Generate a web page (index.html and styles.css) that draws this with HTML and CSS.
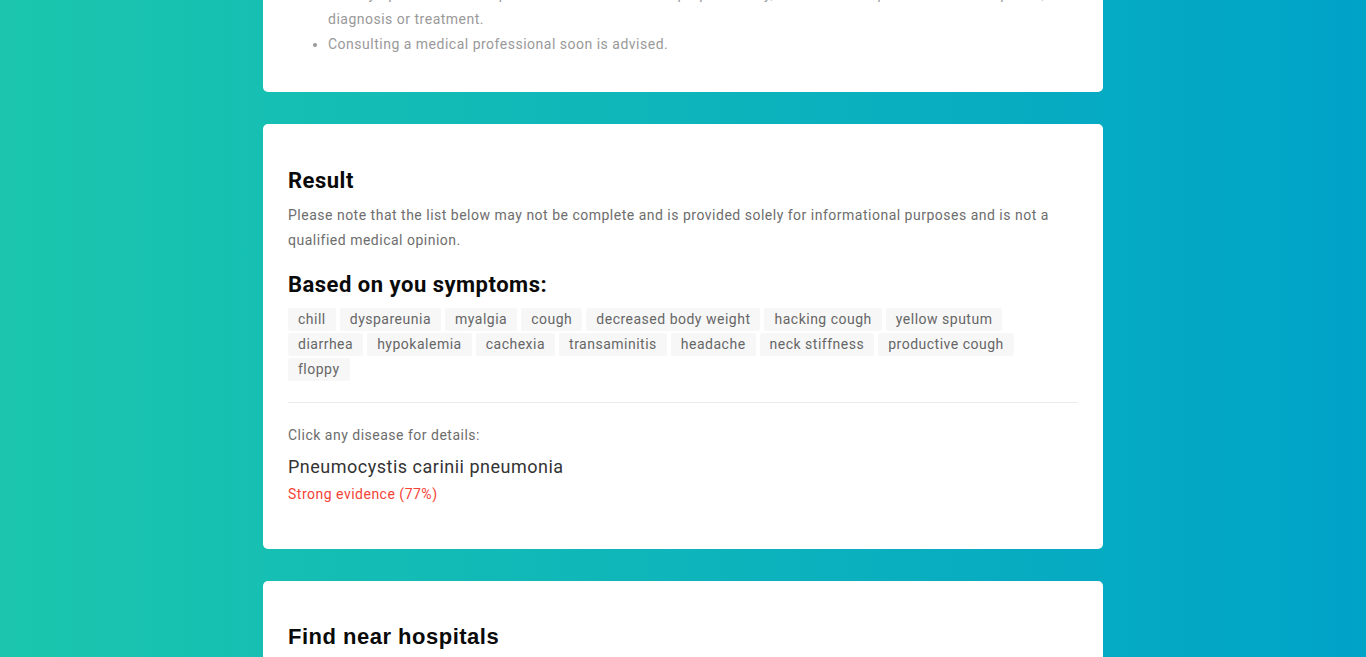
FILE: index.html
```html
<!DOCTYPE html>
<html lang="en">
<head>
<meta charset="utf-8">
<title>Symptom checker result</title>
<link rel="stylesheet" href="styles.css">
</head>
<body>
<main class="page">
  <section class="card card-advice">
    <ul class="advice-list">
      <li>This symptom checker is provided for informational purposes only, and it is not a qualified medical opinion, diagnosis or treatment.</li>
      <li>Consulting a medical professional soon is advised.</li>
    </ul>
  </section>

  <section class="card card-result">
    <h2 class="card-title">Result</h2>
    <p class="note">Please note that the list below may not be complete and is provided solely for informational purposes and is not a qualified medical opinion.</p>
    <h2 class="card-title subtitle">Based on you symptoms:</h2>
    <div class="tags">
      <span class="tag">chill</span>
      <span class="tag">dyspareunia</span>
      <span class="tag">myalgia</span>
      <span class="tag">cough</span>
      <span class="tag">decreased body weight</span>
      <span class="tag">hacking cough</span>
      <span class="tag">yellow sputum</span>
      <span class="tag">diarrhea</span>
      <span class="tag">hypokalemia</span>
      <span class="tag">cachexia</span>
      <span class="tag">transaminitis</span>
      <span class="tag">headache</span>
      <span class="tag">neck stiffness</span>
      <span class="tag">productive cough</span>
      <span class="tag">floppy</span>
    </div>
    <hr class="divider">
    <p class="hint">Click any disease for details:</p>
    <div class="disease">
      <div class="disease-name">Pneumocystis carinii pneumonia</div>
      <div class="evidence">Strong evidence (77%)</div>
    </div>
  </section>

  <section class="card card-hospitals">
    <h3 class="hospitals-title">Find near hospitals</h3>
  </section>
</main>
</body>
</html>
```

FILE: styles.css
```css
html, body {
  margin: 0;
  padding: 0;
}
body {
  height: 657px;
  overflow: hidden;
  background: linear-gradient(to right, #1bc6ad 0%, #00a3c8 100%);
  font-family: Roboto, "Liberation Sans", Arial, sans-serif;
  letter-spacing: 0.5px;
}
.page {
  width: 840px;
  margin: -58px auto 0;
  display: flex;
  flex-direction: column;
  gap: 32px;
}
.card {
  background: #fff;
  border-radius: 5px;
  padding: 40px 25px;
}
.card-advice {
  padding-bottom: 35px;
}
.advice-list {
  margin: 0;
  padding-left: 40px;
  color: #999;
  font-size: 14px;
  line-height: 25px;
}
.card-result {
  padding-top: 39px;
  padding-bottom: 46px;
}
.card-title {
  margin: 0;
  font-size: 22px;
  font-weight: 700;
  color: #0a0a0a;
  line-height: 36px;
}
.subtitle {
  margin-top: 14px;
}
.note {
  margin: 4px 0 0;
  font-size: 14px;
  line-height: 25px;
  color: #6d6d6d;
}
.tags {
  display: flex;
  flex-wrap: wrap;
  gap: 2px 4px;
  margin-top: 5px;
}
.tag {
  background: #f7f7f7;
  color: #666;
  font-size: 14px;
  line-height: 23px;
  padding: 0 10px;
  border-radius: 2px;
}
.divider {
  border: 0;
  border-top: 1px solid #eaeaea;
  margin: 21px 0 0;
}
.hint {
  margin: 22px 0 0;
  font-size: 14px;
  line-height: 20px;
  color: #6d6d6d;
}
.disease {
  margin-top: 11px;
}
.disease-name {
  font-size: 18px;
  line-height: 22px;
  color: #333;
}
.evidence {
  margin-top: 7px;
  font-size: 14px;
  line-height: 18px;
  color: #f44336;
}
.card-hospitals {
  padding-top: 40px;
  min-height: 200px;
}
.hospitals-title {
  margin: 0;
  font-family: "Liberation Sans", Arial, sans-serif;
  font-size: 22px;
  font-weight: 700;
  color: #0a0a0a;
  line-height: 32px;
}
```
